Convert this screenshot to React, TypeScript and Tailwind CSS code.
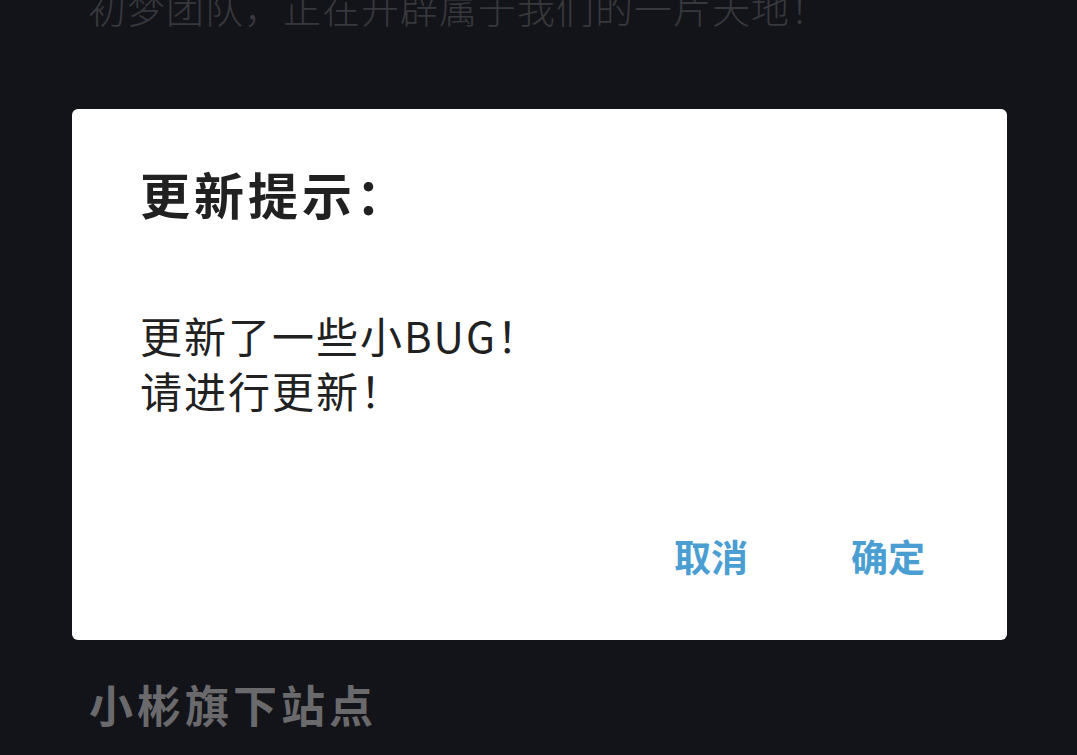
import React from "react";

const CJK = '"Noto Sans CJK SC", "Noto Sans", sans-serif';

/** Update-notice modal sitting over the dimmed site page. */
export default function App() {
  return (
    <div
      className="relative h-[755px] w-[1077px] overflow-hidden bg-[#131419]"
      style={{ fontFamily: CJK }}
    >
      {/* page behind the overlay */}
      <div className="flex h-full flex-col px-[88px]">
        <p className="-mt-[12px] text-[38px] leading-none font-light tracking-[1px] text-[#37383d]">
          初梦团队，正在开辟属于我们的一片天地！
        </p>
        <h2 className="mt-auto mb-[29px] ml-[1px] text-[44px] leading-none font-bold tracking-[4px] text-[#6a6a6d]">
          小彬旗下站点
        </h2>
      </div>

      {/* dialog */}
      <div className="absolute left-[72px] top-[109px] flex h-[531px] w-[935px] flex-col rounded-[6px] bg-white pl-[68px] pr-[82px] pt-[59px]">
        <h1 className="text-[50px] leading-none font-bold tracking-[4px] text-[#212121]">
          更新提示：
        </h1>
        <div className="mt-[89px] text-[42px] leading-[55px] tracking-[2px] text-[#212121]">
          <p>更新了一些小BUG！</p>
          <p>请进行更新！</p>
        </div>
        <div className="mt-[121px] flex justify-end gap-[103px] text-[37px] leading-none font-bold text-[#4a9ed2]">
          <button>取消</button>
          <button>确定</button>
        </div>
      </div>
    </div>
  );
}
